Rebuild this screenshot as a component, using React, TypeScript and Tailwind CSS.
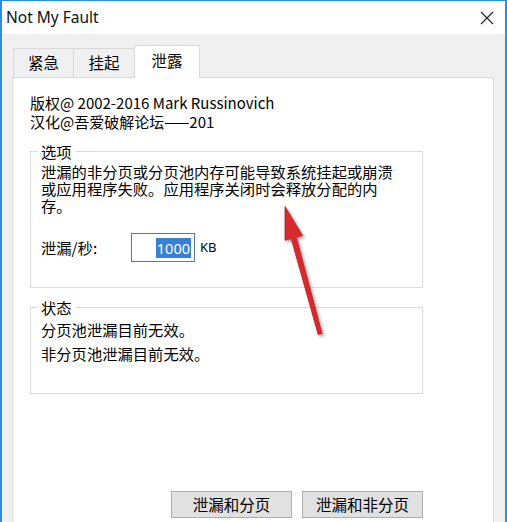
const cjk = "font-['Noto_Sans_CJK_SC','Noto_Sans',sans-serif]";

function Tab({ label, active, width }: { label: string; active?: boolean; width: string }) {
	return (
		<div
			className={
				active
					? `${width} h-[33px] flex items-center justify-center bg-white border-x border-t border-[#d9d9d9] text-[15.5px] pb-[2px]`
					: `${width} h-[29px] mb-[1px] flex items-center justify-center border-l border-t border-[#d9d9d9] text-[15.5px]`
			}
		>
			{label}
		</div>
	);
}

function GroupBox({ title, className, children }: { title: string; className?: string; children: React.ReactNode }) {
	return (
		<fieldset className={`border border-[#dcdcdc] pl-[10px] ${className ?? ''}`}>
			<legend className="-ml-[3px] px-[3px] text-[15.3px] leading-[18px]">{title}</legend>
			{children}
		</fieldset>
	);
}

function LeakArrow() {
	// red annotation arrow pointing up at the description text
	return (
		<svg className="pointer-events-none absolute left-0 top-0" width="507" height="522" viewBox="0 0 507 522">
			<defs>
				<filter id="arrow-shadow" x="-50%" y="-50%" width="200%" height="200%">
					<feDropShadow dx="2" dy="2" stdDeviation="1.5" floodColor="#000" floodOpacity="0.35" />
				</filter>
			</defs>
			<path
				d="M283 205.5 L300.5 234.5 L294.3 236.2 L320 332.5 L316.2 333.6 L289.2 237.6 L283 239.3 Z"
				fill="#d82a2e"
				stroke="#b51d22"
				strokeWidth="0.8"
				strokeLinejoin="round"
				filter="url(#arrow-shadow)"
			/>
		</svg>
	);
}

export default function App() {
	return (
		<div className={`relative w-[507px] h-[522px] overflow-hidden flex flex-col border-x-2 border-t border-[#2d8fd5] text-black ${cjk}`}>
			{/* title bar */}
			<div className="h-[33px] bg-white flex items-center justify-between pl-[4px] pr-[11px]">
				<span className="font-['Noto_Sans',sans-serif] text-[15.5px] text-[#111]">Not My Fault</span>
				<svg width="14" height="14" viewBox="0 0 14 14">
					<path d="M1 1 L13 13 M13 1 L1 13" stroke="#222" strokeWidth="1.1" />
				</svg>
			</div>

			<div className="flex-1 flex flex-col bg-[#f0f0f0] pl-[10px] pr-[11px] pt-[11px]">
				<div className="relative z-10 -mb-px ml-[1px] flex items-end">
					<Tab label="紧急" width="w-[60px]" />
					<Tab label="挂起" width="w-[61px]" />
					<Tab label="泄露" width="w-[66px]" active />
				</div>

				<div className="flex-1 bg-white border-x border-t border-[#d9d9d9]">
					<div className="ml-[17px] w-[393px] pt-[15px]">
						<div className="text-[15px] leading-[19px]">
							<div>版权@ 2002-2016 Mark Russinovich</div>
							<div>汉化@吾爱破解论坛——201</div>
						</div>

						<GroupBox title="选项" className="mt-[11px] pb-[25px]">
							<p className="pt-[3px] text-[15.3px] leading-[17px]">
								泄漏的非分页或分页池内存可能导致系统挂起或崩溃
								<br />
								或应用程序失败。应用程序关闭时会释放分配的内
								<br />
								存。
							</p>
							<div className="mt-[19px] flex items-center">
								<span className="w-[90px] text-[15.3px]">泄漏/秒:</span>
								<div className="w-[64px] h-[29px] border border-[#4f7ba6] flex items-center justify-end pr-[3px]">
									<span className="bg-[#3a7fd6] text-white font-['Noto_Sans',sans-serif] text-[14.5px] leading-[20px] px-[1px]">
										1000
									</span>
								</div>
								<span className="ml-[5px] font-['Noto_Sans',sans-serif] text-[13px]">KB</span>
							</div>
						</GroupBox>

						<GroupBox title="状态" className="mt-[10px] pb-[28px]">
							<div className="pt-[1px] text-[15.3px] leading-[24px]">
								<div>分页池泄漏目前无效。</div>
								<div>非分页池泄漏目前无效。</div>
							</div>
						</GroupBox>

						<div className="mt-[97px] flex justify-end gap-[10px]">
							<button className="w-[121px] h-[27px] bg-[#e1e1e1] border border-[#adadad] text-[15.5px] leading-none">
								泄漏和分页
							</button>
							<button className="w-[121px] h-[27px] bg-[#e1e1e1] border border-[#adadad] text-[15.5px] leading-none">
								泄漏和非分页
							</button>
						</div>
					</div>
				</div>
			</div>

			<LeakArrow />
		</div>
	);
}
